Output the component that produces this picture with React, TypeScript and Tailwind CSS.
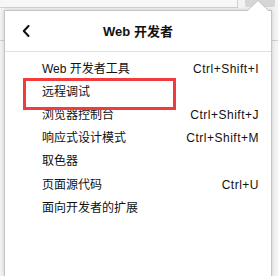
import React from "react";

const items: { label: string; shortcut?: string }[] = [
  { label: "Web 开发者工具", shortcut: "Ctrl+Shift+I" },
  { label: "远程调试" },
  { label: "浏览器控制台", shortcut: "Ctrl+Shift+J" },
  { label: "响应式设计模式", shortcut: "Ctrl+Shift+M" },
  { label: "取色器" },
  { label: "页面源代码", shortcut: "Ctrl+U" },
  { label: "面向开发者的扩展" },
];

export default function App() {
  return (
    <div
      className="relative w-[278px] h-[276px] overflow-hidden bg-[#f3f3f3] flex flex-col"
      style={{ fontFamily: '"Liberation Sans", "Noto Sans CJK SC", sans-serif' }}
    >
      {/* toolbar strip */}
      <div className="h-[10px] flex shrink-0">
        <div className="w-[238px] h-[8px] border-b border-r border-[#d2d2d2] bg-[#f7f7f7]" />
        <div className="ml-[7px] w-[30px] h-[7px] bg-[#d6d6d6] rounded-b-[2px]" />
      </div>
      {/* toolbar bottom line behind panel */}
      <div className="absolute left-0 top-[40px] w-full h-px bg-[#d2d2d2]" />

      {/* panel */}
      <div className="relative ml-[4px] w-[268px] flex-1 bg-white border border-[#c4c4c4] border-b-0 shadow-[0_0_4px_rgba(0,0,0,0.18)]">
        <div className="relative h-[41px] flex items-center justify-center border-b border-[#e0e0e0]">
          <svg
            className="absolute left-[17px] top-[14px]"
            width="8"
            height="12"
            viewBox="0 0 8 12"
          >
            <polyline
              points="6.5,1 1.8,6 6.5,11"
              fill="none"
              stroke="#111"
              strokeWidth="2"
              strokeLinecap="round"
              strokeLinejoin="round"
            />
          </svg>
          <span className="text-[13px] font-bold text-[#111] leading-none">Web 开发者</span>
        </div>
        <div className="pt-[5px]">
          {items.map((it) => (
            <div
              key={it.label}
              className="h-[23.2px] flex items-center justify-between pl-[37px] pr-[12px] text-[12px] text-[#111]"
            >
              <span>{it.label}</span>
              {it.shortcut && <span className="tracking-[0.5px]">{it.shortcut}</span>}
            </div>
          ))}
        </div>
      </div>

      {/* panel arrow */}
      <svg className="absolute left-[247px] top-0" width="22" height="12" viewBox="0 0 22 12">
        <polygon points="0,11.5 11,0.5 22,11.5" fill="#fff" />
        <polyline points="0.5,10.5 11,0.5 21.5,10.5" fill="none" stroke="#c4c4c4" strokeWidth="1" />
      </svg>

      {/* red annotation box */}
      <div className="absolute left-[23px] top-[78px] w-[153px] h-[32px] border-[3px] border-[#f03c3c]" />
    </div>
  );
}
